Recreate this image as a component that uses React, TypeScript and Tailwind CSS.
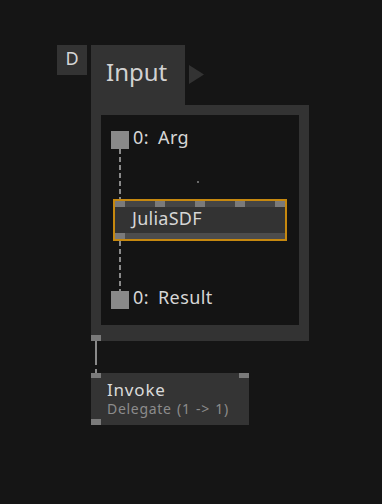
import React from "react";

const font = { fontFamily: '"Noto Sans", "Open Sans", sans-serif' };

const Dashed = ({ h }: { h: number }) => (
  <svg width={2} height={h} className="block">
    <line x1={1} y1={0} x2={1} y2={h} stroke="#8a8a8a" strokeWidth={2} strokeDasharray="5 3" />
  </svg>
);

// io pad inside the region: square pin + label
const Pad = ({ label, top }: { label: string; top: number }) => (
  <div className="absolute left-[10px] flex items-start gap-[4px]" style={{ top }}>
    <div className="w-[18px] h-[18px] bg-[#8a8a8a]" />
    <div className="-mt-[3px] text-[18px] leading-none text-[#d6d6d6] whitespace-pre tracking-[0.4px] [word-spacing:4px]">
      {label}
    </div>
  </div>
);

const JuliaNode = () => (
  <div className="absolute left-[12px] top-[84px] w-[174px] border-2 border-[#c6880f]">
    <div className="h-[6px] bg-[#454545] flex justify-between">
      {[0, 1, 2, 3, 4].map((i) => (
        <div key={i} className="w-[10px] h-full bg-[#7a7a7a]" />
      ))}
    </div>
    <div className="h-[26px] bg-[#333333] pl-[17px] text-[18px] leading-[22px] tracking-[0.25px] text-[#d6d6d6]">
      JuliaSDF
    </div>
    <div className="h-[6px] bg-[#4c4c4c]">
      <div className="w-[10px] h-full bg-[#7a7a7a]" />
    </div>
  </div>
);

export default function App() {
  return (
    <div className="relative w-[382px] h-[504px] bg-[#151515] overflow-hidden" style={font}>
      {/* D button */}
      <div className="absolute left-[57px] top-[45px] w-[30px] h-[30px] bg-[#333333] pt-[4px] text-center text-[18px] leading-none text-[#d6d6d6]">
        D
      </div>

      {/* Input region */}
      <div className="absolute left-[91px] top-[45px] flex flex-col">
        <div className="flex items-start">
          <div className="w-[94px] h-[60px] bg-[#333333] pl-[15px] pt-[15px] text-[24px] leading-none text-[#d2d2d2]">
            Input
          </div>
          <svg className="ml-[4px] mt-[20px]" width={15} height={19}>
            <polygon points="0,0 15,9.5 0,19" fill="#333333" />
          </svg>
        </div>
        <div className="relative w-[218px] h-[236px] bg-[#333333] pt-[10px] px-[10px] pb-[16px] flex">
          <div className="relative flex-1 bg-[#141414]">
            <Pad label="0: Arg" top={16} />
            <div className="absolute left-[18px] top-[34px]">
              <Dashed h={50} />
            </div>
            <div className="absolute left-[96px] top-[66px] w-[2px] h-[2px] bg-[#6a6a6a]" />
            <JuliaNode />
            <div className="absolute left-[18px] top-[126px]">
              <Dashed h={50} />
            </div>
            <Pad label="0: Result" top={176} />
          </div>
          <div className="absolute left-0 bottom-0 w-[10px] h-[6px] bg-[#7a7a7a]" />
        </div>
      </div>

      {/* link */}
      <div className="absolute left-[95px] top-[341px] w-[2px] h-[24px] bg-[#8a8a8a]" />
      <div className="absolute left-[95px] top-[369px] w-[2px] h-[4px] bg-[#8a8a8a]" />

      {/* Invoke node */}
      <div className="absolute left-[91px] top-[373px] w-[158px] h-[52px] bg-[#343434] pl-[16px] pt-[8px]">
        <div className="absolute left-0 top-0 w-[10px] h-[5px] bg-[#7a7a7a]" />
        <div className="absolute right-0 top-0 w-[10px] h-[5px] bg-[#7a7a7a]" />
        <div className="absolute left-0 bottom-0 w-[10px] h-[6px] bg-[#7a7a7a]" />
        <div className="text-[17px] leading-none tracking-[0.8px] text-[#dadada]">Invoke</div>
        <div className="mt-[4px] text-[14px] leading-none text-[#8c8c8c] whitespace-pre tracking-[0.7px] [word-spacing:1px]">
          Delegate (1 -&gt; 1)
        </div>
      </div>
    </div>
  );
}
